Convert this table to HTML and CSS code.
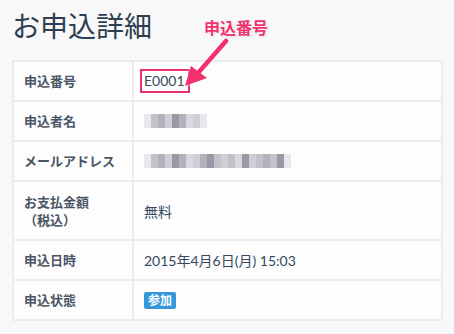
FILE: index.html
```html
<!DOCTYPE html>
<html>
<head>
    <meta charset="UTF-8">
    <title>お申込詳細</title>
    <link rel="stylesheet" href="styles.css">
</head>
<body>
    <div class="page">
        <h1 class="title">お申込詳細</h1>

        <table class="detail-table">
            <tr>
                <th>申込番号</th>
                <td><span class="order-no">E0001</span></td>
            </tr>
            <tr>
                <th>申込者名</th>
                <td>
                    <div class="mosaic mosaic-name">
                        <i></i><i></i><i></i><i></i><i></i><i></i><i></i><i></i><i></i>
                    </div>
                </td>
            </tr>
            <tr>
                <th>メールアドレス</th>
                <td>
                    <div class="mosaic mosaic-mail">
                        <i></i><i></i><i></i><i></i><i></i><i></i><i></i><i></i><i></i><i></i><i></i>
                        <i></i><i></i><i></i><i></i><i></i><i></i><i></i><i></i><i></i><i></i>
                    </div>
                </td>
            </tr>
            <tr class="tall">
                <th>お支払金額<br>（税込）</th>
                <td>無料</td>
            </tr>
            <tr>
                <th>申込日時</th>
                <td>2015年4月6日(月) 15:03</td>
            </tr>
            <tr>
                <th>申込状態</th>
                <td><span class="badge">参加</span></td>
            </tr>
        </table>

        <!-- 注釈：申込番号の位置 -->
        <div class="note">
            <span class="note-label">申込番号</span>
            <svg class="note-arrow" width="60" height="50" viewBox="0 0 60 50">
                <line x1="48" y1="4" x2="20" y2="36" stroke="#f2306e" stroke-width="4.5" stroke-linecap="round"/>
                <polygon points="7,49 13,29 29,41" fill="#f2306e"/>
            </svg>
        </div>
    </div>
</body>
</html>
```

FILE: styles.css
```css
body {
    margin: 0;
    background: #f8f8f9;
    font-family: "Lato", "Noto Sans CJK JP", sans-serif;
    color: #34495e;
}
.page {
    position: relative;
    padding: 6px 11px 0 12px;
}
.title {
    font-size: 28px;
    font-weight: 400;
    line-height: 40px;
    margin: 0 0 14px 0;
    color: #2c3e50;
}
.detail-table {
    width: 431px;
    border-collapse: collapse;
    background: #fdfdfd;
    border: 2px solid #ececec;
    font-size: 14px;
}
.detail-table th,
.detail-table td {
    border: 2px solid #ececec;
    height: 38px;
    padding: 0 10px;
    vertical-align: middle;
    text-align: left;
}
.detail-table th {
    width: 98px;
    font-size: 13px;
    font-weight: 700;
    color: #4a5566;
    line-height: 18px;
}
.detail-table .tall th,
.detail-table .tall td {
    height: 57px;
}
.order-no {
    display: inline-block;
    margin-left: -4px;
    padding: 1px 3px 1px 2px;
    line-height: 18px;
    border: 2px solid #e83170;
    background: #fff;
    box-shadow: 0 0 2px rgba(255, 255, 255, 0.9);
}
.mosaic {
    display: flex;
    height: 14px;
    filter: blur(0.6px);
}
.mosaic i {
    width: 7px;
    height: 14px;
    background: #c3c1ca;
}
.mosaic i:nth-child(3n) { background: #b3b1bc; }
.mosaic i:nth-child(4n) { background: #d0cfd6; }
.mosaic i:nth-child(5n) { background: #9a98a6; }
.mosaic i:nth-child(7n) { background: #d8d9e0; }
.mosaic i:first-child,
.mosaic i:last-child { background: #e8e8ec; }
.badge {
    display: inline-block;
    padding: 0 4px;
    font-size: 12px;
    font-weight: 700;
    line-height: 17px;
    color: #fff;
    background: #3498db;
    border-radius: 2px;
}
.note {
    position: absolute;
    top: 15px;
    left: 178px;
}
.note-label {
    display: block;
    margin-left: 26px;
    font-size: 16px;
    font-weight: 700;
    color: #f2306e;
    text-shadow: 0 0 2px #fff, 0 0 2px #fff, 1px 1px 2px rgba(0, 0, 0, 0.15);
}
.note-arrow {
    display: block;
    margin-top: -2px;
    filter: drop-shadow(0 0 1px #fff);
}
```
